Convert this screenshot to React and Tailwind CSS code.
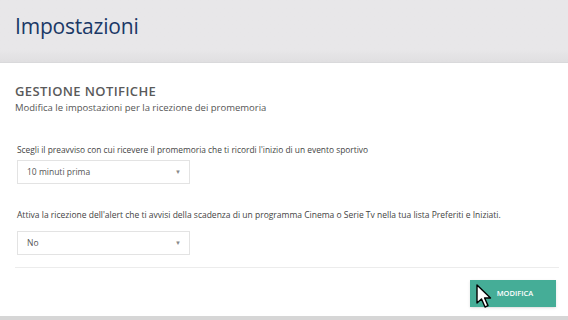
function Select({ value }) {
  return (
    <div className="flex h-[24px] w-[173px] items-center justify-between border border-[#e3e3e3] bg-white pl-[9px] pr-[8px] text-[8.5px] text-[#555]">
      <span>{value}</span>
      <span className="text-[6px] text-[#888]">▼</span>
    </div>
  );
}

function Cursor() {
  return (
    <svg
      className="pointer-events-none absolute left-[6px] top-[6px]"
      width="18"
      height="26"
      viewBox="0 0 18 26"
    >
      <path
        d="M1 1 L1 19 L5.5 15 L9 23 L12 21.6 L8.6 14 L14.5 14 Z"
        fill="#fff"
        stroke="#000"
        strokeWidth="1.4"
        strokeLinejoin="round"
      />
    </svg>
  );
}

export default function App() {
  return (
    <div
      className="flex h-[320px] w-[568px] flex-col overflow-hidden bg-white"
      style={{ fontFamily: "'Open Sans', 'Liberation Sans', sans-serif" }}
    >
      {/* Header */}
      <div className="flex h-[63px] shrink-0 items-center border-b border-[#d9d9db] bg-gradient-to-b from-[#e8e7e9] from-80% to-[#e0dfe1] px-[15px] pb-[8px]">
        <h1 className="text-[21px] font-normal tracking-[-0.2px] text-[#1a3866]">
          Impostazioni
        </h1>
      </div>

      {/* Content */}
      <div className="flex flex-1 flex-col px-[15px] pt-[20px]">
        <h2 className="text-[13px] font-semibold leading-[16px] tracking-[0.4px] text-[#5a5a5a]">
          GESTIONE NOTIFICHE
        </h2>
        <p className="mt-[2px] text-[9.5px] leading-[13px] text-[#555]">
          Modifica le impostazioni per la ricezione dei promemoria
        </p>

        <div className="mt-[30px] flex flex-col gap-[4px] pl-[2px]">
          <p className="text-[8.4px] leading-[12px] text-[#444]">
            Scegli il preavviso con cui ricevere il promemoria che ti ricordi l'inizio di un evento sportivo
          </p>
          <Select value="10 minuti prima" />
        </div>

        <div className="mt-[25px] flex flex-col gap-[10px] pl-[2px]">
          <p className="text-[8.5px] leading-[12px] text-[#444]">
            Attiva la ricezione dell'alert che ti avvisi della scadenza di un programma Cinema o Serie Tv nella tua lista Preferiti e Iniziati.
          </p>
          <Select value="No" />
        </div>

        <div className="mt-[12px] mr-[-6px] border-t border-[#ececec]" />

        <div className="mt-[10px] flex justify-end">
          <div className="relative mr-[-3px]">
            <button className="h-[27px] w-[86px] bg-[#45ad97] pl-[4px] text-[7.5px] font-semibold text-white shadow-sm">
              MODIFICA
            </button>
            <Cursor />
          </div>
        </div>
      </div>

      <div className="h-[4px] shrink-0 bg-[#d6d6d6]" />
    </div>
  );
}
